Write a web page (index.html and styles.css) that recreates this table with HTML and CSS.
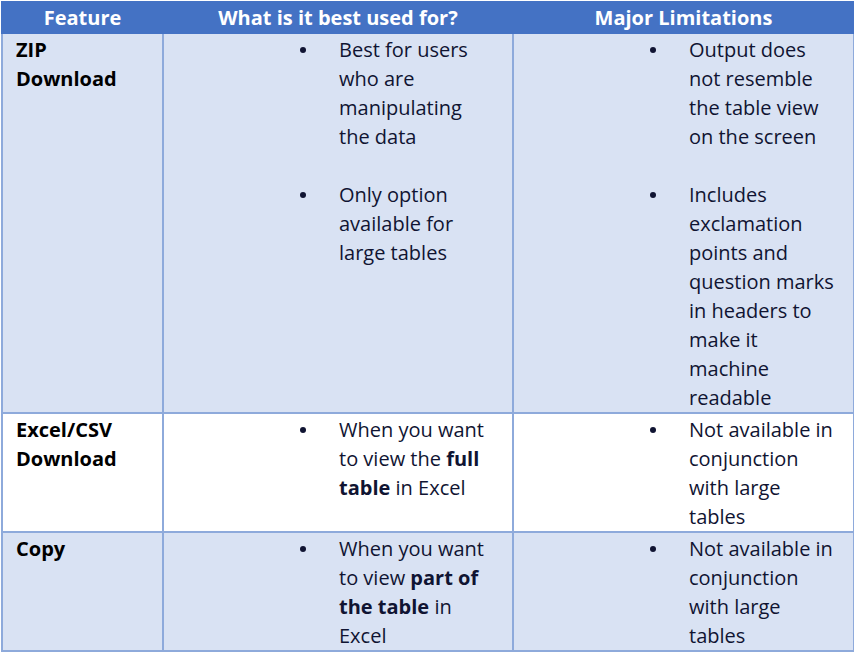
FILE: index.html
```html
<!DOCTYPE html>
<html>
<head>
<meta charset="utf-8">
<link rel="stylesheet" href="styles.css">
</head>
<body>
<table class="grid">
  <colgroup>
    <col class="c1"><col class="c2"><col class="c3">
  </colgroup>
  <thead>
    <tr>
      <th>Feature</th>
      <th>What is it best used for?</th>
      <th>Major Limitations</th>
    </tr>
  </thead>
  <tbody>
    <tr class="shaded">
      <td class="feat">ZIP<br>Download</td>
      <td>
        <ul class="list">
          <li><span class="dot"></span><span class="txt">Best for users<br>who are<br>manipulating<br>the data</span></li>
          <li><span class="dot"></span><span class="txt">Only option<br>available for<br>large tables</span></li>
        </ul>
      </td>
      <td>
        <ul class="list">
          <li><span class="dot"></span><span class="txt">Output does<br>not resemble<br>the table view<br>on the screen</span></li>
          <li><span class="dot"></span><span class="txt">Includes<br>exclamation<br>points and<br>question marks<br>in headers to<br>make it<br>machine<br>readable</span></li>
        </ul>
      </td>
    </tr>
    <tr class="plain">
      <td class="feat">Excel/CSV<br>Download</td>
      <td>
        <ul class="list">
          <li><span class="dot"></span><span class="txt">When you want<br>to view the <b>full</b><br><b>table</b> in Excel</span></li>
        </ul>
      </td>
      <td>
        <ul class="list">
          <li><span class="dot"></span><span class="txt">Not available in<br>conjunction<br>with large<br>tables</span></li>
        </ul>
      </td>
    </tr>
    <tr class="shaded">
      <td class="feat">Copy</td>
      <td>
        <ul class="list">
          <li><span class="dot"></span><span class="txt">When you want<br>to view <b>part of</b><br><b>the table</b> in<br>Excel</span></li>
        </ul>
      </td>
      <td>
        <ul class="list">
          <li><span class="dot"></span><span class="txt">Not available in<br>conjunction<br>with large<br>tables</span></li>
        </ul>
      </td>
    </tr>
  </tbody>
</table>
</body>
</html>
```

FILE: styles.css
```css
html, body {
  margin: 0;
  padding: 0;
  background: #ffffff;
}
body {
  padding: 1px 0 0 1px;
  font-family: "Open Sans", "Noto Sans", sans-serif;
  font-size: 20px;
  line-height: 29px;
}
.grid {
  border-collapse: collapse;
  table-layout: fixed;
  width: 852px;
}
.c1 { width: 161px; }
.c2 { width: 350px; }
.c3 { width: 341px; }
.grid th {
  background: #4472c4;
  color: #ffffff;
  font-weight: 700;
  text-align: center;
  border: 2px solid #4472c4;
  height: 28px;
  padding: 0;
  line-height: 29px;
  white-space: nowrap;
}
.grid td {
  border: 2px solid #8eaadb;
  vertical-align: top;
  padding: 1px 0 0 0;
}
.grid td.feat {
  padding-left: 13px;
  font-weight: 700;
  color: #000000;
}
.shaded td { background: #d9e2f3; }
.plain td { background: #ffffff; }
.list {
  list-style: none;
  margin: 0;
  padding: 0;
  color: #101432;
}
.list li {
  display: flex;
  align-items: flex-start;
}
.list li + li {
  margin-top: 29px;
}
.dot {
  flex: none;
  width: 6px;
  height: 6px;
  border-radius: 50%;
  background: #101432;
  margin: 12px 33px 0 136px;
}
.txt {
  flex: 1;
  min-width: 0;
  white-space: nowrap;
}
.txt b { font-weight: 700; }
```
